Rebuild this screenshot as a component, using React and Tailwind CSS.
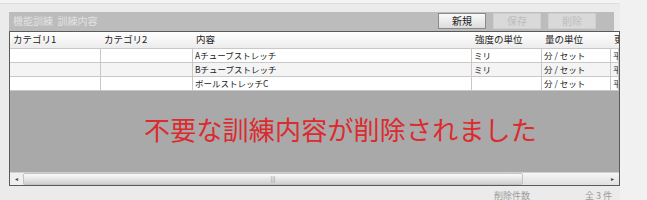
const cols = ['w-[91px]', 'w-[92px]', 'w-[279px]', 'w-[70px]', 'w-[69px]', 'flex-1']

const head = ['カテゴリ1', 'カテゴリ2', '内容', '強度の単位', '量の単位', '更']

const rows = [
  ['', '', 'Aチューブストレッチ', 'ミリ', '分 / セット', '平'],
  ['', '', 'Bチューブストレッチ', 'ミリ', '分 / セット', '平'],
  ['', '', 'ボールストレッチC', '', '分 / セット', '平'],
]

function Btn({ label, disabled }) {
  return (
    <div
      className={`w-[48px] h-[16px] flex items-center justify-center text-[10px] border ${
        disabled
          ? 'border-[#cfcfcf] bg-[#d9d9d9] text-[#bdbdbd]'
          : 'border-[#8a8a8a] bg-gradient-to-b from-[#fafafa] to-[#dcdcdc] text-[#222]'
      }`}
    >
      {label}
    </div>
  )
}

export default function App() {
  return (
    <div className="w-[647px] h-[200px] overflow-hidden flex bg-[#f1f1f1] font-['Noto_Sans_CJK_JP','Noto_Sans',sans-serif] leading-none">
      <div className="w-[620px] shrink-0 bg-[#ebebeb] flex flex-col">
        <div className="h-[4px] bg-[#f4f4f4] border-b border-[#dedede]" />
        <div className="h-[8px]" />
        <div className="ml-[9px] w-[605px] h-[20px] bg-[#bcbcbc] flex items-center justify-between pl-[4px] pr-[18px]">
          <span className="text-[10px] text-[#e2e2e2]">機能訓練&nbsp;&nbsp;訓練内容</span>
          <div className="flex gap-[7px]">
            <Btn label="新規" />
            <Btn label="保存" disabled />
            <Btn label="削除" disabled />
          </div>
        </div>
        <div className="ml-[9px] w-[611px] h-[159px] border border-[#5a5a5a] bg-[#a9a9a9] flex flex-col">
          <div className="h-[17px] flex bg-gradient-to-b from-[#ffffff] to-[#ececec] border-b border-[#c8c8c8]">
            {head.map((h, i) => (
              <div key={i} className={`${cols[i]} shrink-0 flex items-center pl-[3px] text-[9.5px] text-[#222] overflow-hidden whitespace-nowrap`}>
                {h}
              </div>
            ))}
          </div>
          {rows.map((r, ri) => (
            <div key={ri} className={`h-[14px] flex border-b border-[#c8c8c8] ${ri === 1 ? 'bg-[#f4f4f4]' : 'bg-white'}`}>
              {r.map((c, i) => (
                <div key={i} className={`${cols[i]} shrink-0 flex items-center pl-[2px] text-[8.5px] text-[#222] border-r border-[#c8c8c8] overflow-hidden whitespace-nowrap`}>
                  {c}
                </div>
              ))}
            </div>
          ))}
          <div className="flex-1 pl-[134px] pt-[25px]">
            <span className="text-[26px] text-[#dd2a2f] tracking-[0.2px]">不要な訓練内容が削除されました</span>
          </div>
          <div className="h-[13px] flex bg-gradient-to-b from-[#f6f6f6] to-[#e0e0e0] border-t border-[#d0d0d0]">
            <div className="w-[13px] flex items-center justify-center text-[6px] text-[#444] bg-[#efefef]">◂</div>
            <div className="w-[500px] bg-gradient-to-b from-[#fbfbfb] via-[#e6e6e6] to-[#cfcfcf] border border-[#c4c4c4] rounded-[2px] flex items-center justify-center">
              <span className="text-[6px] text-[#888]">|||</span>
            </div>
            <div className="flex-1" />
            <div className="w-[13px] flex items-center justify-center text-[6px] text-[#444]">▸</div>
          </div>
        </div>
        <div className="flex justify-end gap-[55px] pr-[8px] pt-[5px] text-[9px] text-[#9a9a9a]">
          <span>削除件数</span>
          <span>全 3 件</span>
        </div>
      </div>
      <div className="flex-1" />
    </div>
  )
}
